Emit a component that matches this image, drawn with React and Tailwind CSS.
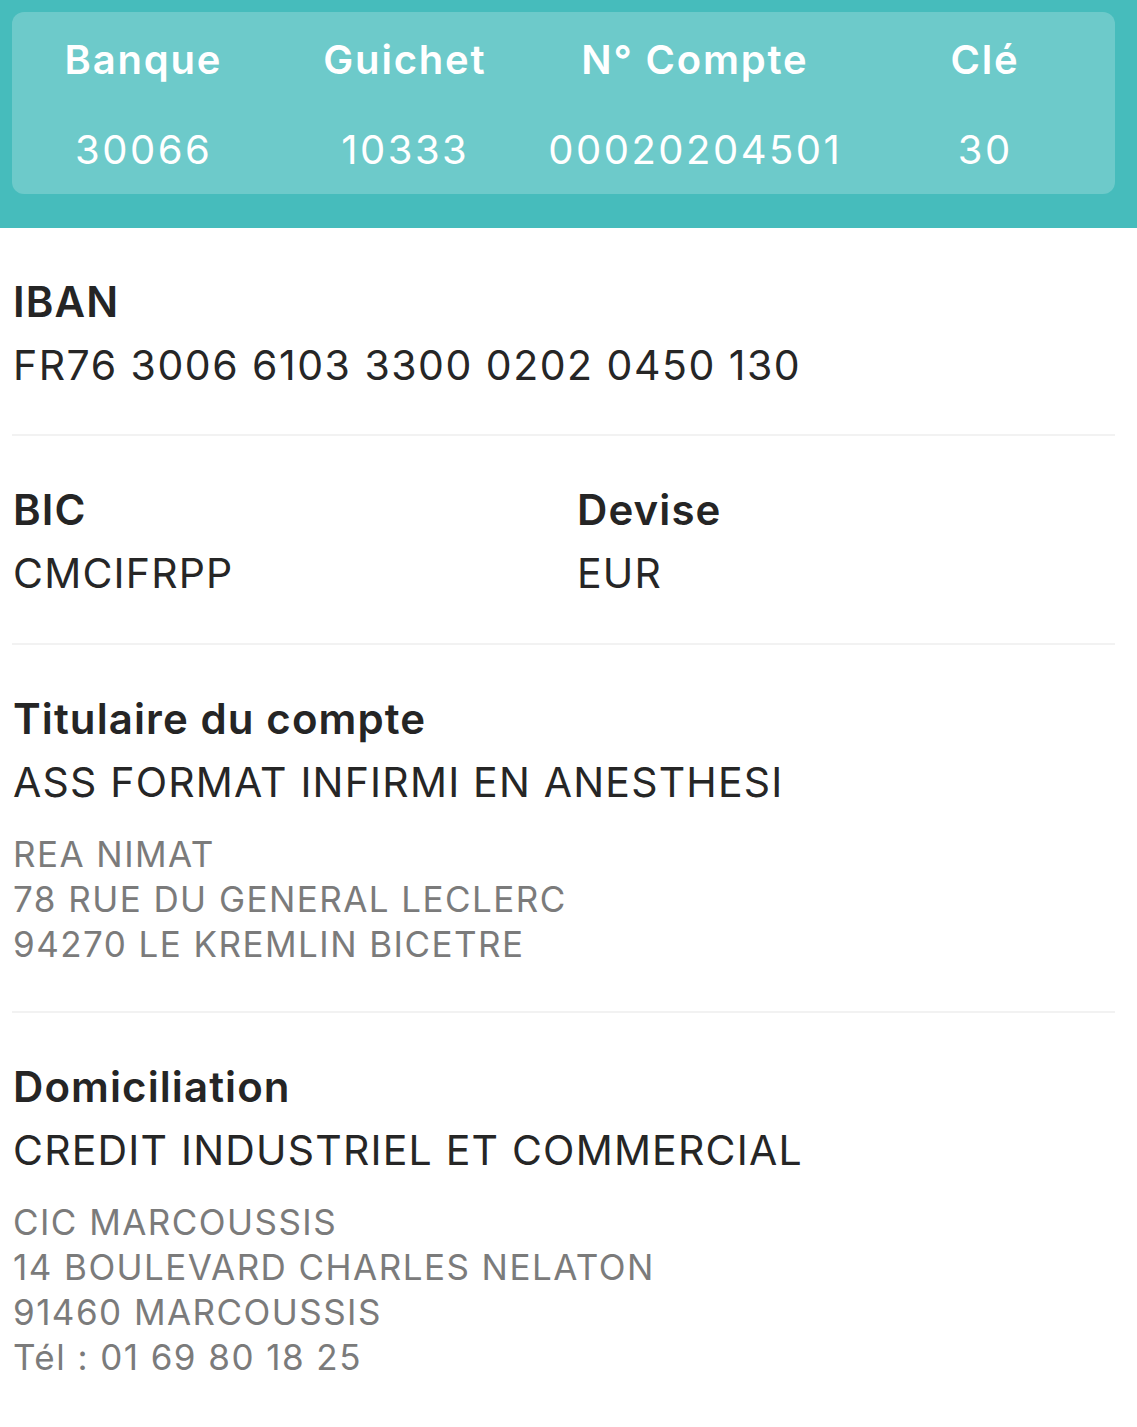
import React from "react";

const cols = [
  ["Banque", "30066"],
  ["Guichet", "10333"],
  ["N° Compte", "00020204501"],
  ["Clé", "30"],
];

function Label({ children }) {
  return (
    <div className="text-[42px] leading-[52px] font-semibold text-[#252525] tracking-[1.1px]">
      {children}
    </div>
  );
}

function Value({ children, wide }) {
  return (
    <div
      className={
        "mt-[11px] text-[41px] leading-[52px] font-normal text-[#262626] " +
        (wide ? "tracking-[1.5px]" : "tracking-[1.2px]")
      }
    >
      {children}
    </div>
  );
}

function Gray({ lines }) {
  return (
    <div className="mt-[24px] text-[35px] leading-[45px] text-[#7b7b7b] tracking-[1.45px]">
      {lines.map((l) => (
        <div key={l}>{l}</div>
      ))}
    </div>
  );
}

function Divider() {
  return <div className="ml-3 mr-[22px] h-[2px] bg-[#f2f2f2]" />;
}

export default function App() {
  return (
    <div
      className="w-[1137px] min-h-[1427px] bg-white"
      style={{ fontFamily: "Inter, 'Noto Sans', sans-serif" }}
    >
      <div className="bg-[#46bcbc] h-[228px] pl-3 pr-[22px] pt-3">
        <div className="bg-[#6dcaca] rounded-[12px] h-[182px] grid grid-cols-[261px_262px_318px_1fr] text-white">
          {cols.map(([h, v]) => (
            <div key={h} className="flex flex-col items-center">
              <div className="mt-[25px] text-[40px] leading-[46px] font-semibold tracking-[1.8px] pl-[1.8px]">
                {h}
              </div>
              <div className="mt-[43px] text-[40px] leading-[48px] font-normal tracking-[2.5px] pl-[2.5px]">
                {v}
              </div>
            </div>
          ))}
        </div>
      </div>

      <div className="pl-[13px] pr-[22px] pt-[48px] pb-[43px]">
        <Label>IBAN</Label>
        <Value wide>FR76 3006 6103 3300 0202 0450 130</Value>
      </div>
      <Divider />

      <div className="pl-[13px] pr-[22px] pt-[48px] pb-[44px] grid grid-cols-[564px_1fr]">
        <div>
          <Label>BIC</Label>
          <Value>CMCIFRPP</Value>
        </div>
        <div>
          <Label>Devise</Label>
          <Value>EUR</Value>
        </div>
      </div>
      <Divider />

      <div className="pl-[13px] pr-[22px] pt-[48px] pb-[44px]">
        <Label>Titulaire du compte</Label>
        <Value>ASS FORMAT INFIRMI EN ANESTHESI</Value>
        <Gray lines={["REA NIMAT", "78 RUE DU GENERAL LECLERC", "94270 LE KREMLIN BICETRE"]} />
      </div>
      <Divider />

      <div className="pl-[13px] pr-[22px] pt-[48px] pb-[40px]">
        <Label>Domiciliation</Label>
        <Value>CREDIT INDUSTRIEL ET COMMERCIAL</Value>
        <Gray
          lines={[
            "CIC MARCOUSSIS",
            "14 BOULEVARD CHARLES NELATON",
            "91460 MARCOUSSIS",
            "Tél : 01 69 80 18 25",
          ]}
        />
      </div>
    </div>
  );
}
